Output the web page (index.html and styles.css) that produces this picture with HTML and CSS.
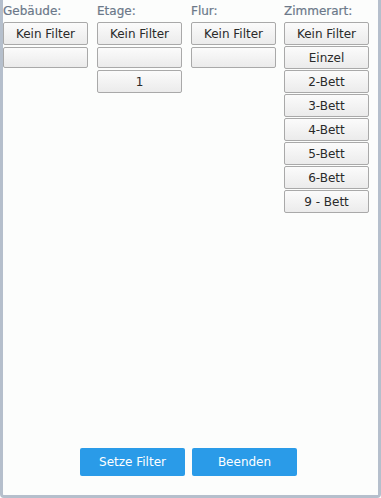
FILE: index.html
```html
<!DOCTYPE html>
<html lang="de">
<head>
<meta charset="utf-8">
<title>Filter</title>
<link rel="stylesheet" href="styles.css">
</head>
<body>
<div class="panel">
  <div class="columns">
    <div class="col">
      <div class="head">Gebäude:</div>
      <button class="btn">Kein Filter</button>
      <button class="btn empty"></button>
    </div>
    <div class="col">
      <div class="head">Etage:</div>
      <button class="btn">Kein Filter</button>
      <button class="btn empty"></button>
      <button class="btn">1</button>
    </div>
    <div class="col">
      <div class="head">Flur:</div>
      <button class="btn">Kein Filter</button>
      <button class="btn empty"></button>
    </div>
    <div class="col">
      <div class="head">Zimmerart:</div>
      <button class="btn">Kein Filter</button>
      <button class="btn">Einzel</button>
      <button class="btn">2-Bett</button>
      <button class="btn">3-Bett</button>
      <button class="btn">4-Bett</button>
      <button class="btn">5-Bett</button>
      <button class="btn">6-Bett</button>
      <button class="btn">9 - Bett</button>
    </div>
  </div>
  <div class="footer">
    <button class="action">Setze Filter</button>
    <button class="action">Beenden</button>
  </div>
</div>
</body>
</html>
```

FILE: styles.css
```css
html, body {
  margin: 0;
  padding: 0;
  background: #ffffff;
}
body {
  font-family: "DejaVu Sans", Verdana, sans-serif;
  font-size: 12px;
}
.panel {
  box-sizing: border-box;
  width: 381px;
  height: 498px;
  background: #fcfdfc;
  border-left: 3px solid #b5bfcc;
  border-right: 3px solid #b5bfcc;
  border-bottom: 3px solid #b5bfcc;
  border-radius: 0 0 4px 4px;
  display: flex;
  flex-direction: column;
}
.columns {
  display: flex;
  gap: 9px;
}
.col {
  width: 85px;
  display: flex;
  flex-direction: column;
}
.col:last-child {
  margin-left: -1px;
}
.head {
  color: #6b7889;
  line-height: 16px;
  padding-top: 3px;
  margin-bottom: 3px;
  white-space: nowrap;
  -webkit-text-stroke: 0.2px #6b7889;
}
.btn {
  box-sizing: border-box;
  height: 23px;
  margin: 0 0 1px 0;
  padding: 0;
  width: 85px;
  font-family: inherit;
  font-size: 12px;
  color: #2a2a2a;
  background: linear-gradient(#fbfbfb, #ebebeb);
  border: 1px solid #a9a9a9;
  border-radius: 2px;
}
.btn.empty {
  height: 21px;
  margin-top: 1px;
  margin-bottom: 2px;
}
.footer {
  margin-top: auto;
  display: flex;
  justify-content: center;
  gap: 7px;
  padding-bottom: 19px;
  padding-right: 4px;
}
.action {
  box-sizing: border-box;
  width: 105px;
  height: 28px;
  padding: 0;
  border: none;
  border-radius: 2px;
  background: #2a9be8;
  color: #ffffff;
  font-family: inherit;
  font-size: 12px;
}
```
